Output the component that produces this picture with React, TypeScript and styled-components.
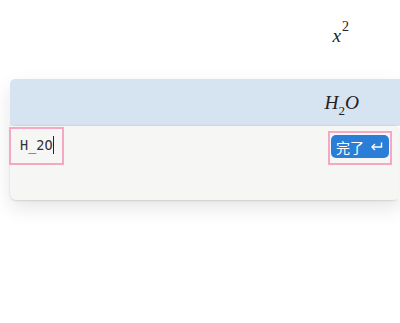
import styled, { createGlobalStyle } from "styled-components";

const GlobalStyle = createGlobalStyle`
  html, body {
    margin: 0;
    padding: 0;
    background: #ffffff;
  }
`;

// page
const Page = styled.div`
  width: 400px;
  height: 323px;
  overflow: hidden;
  font-family: "Noto Sans", "Noto Sans CJK SC", sans-serif;
`;

const Preview = styled.div`
  height: 79px;
  display: flex;
  justify-content: flex-end;
  padding-right: 51px;
  box-sizing: border-box;
  padding-top: 24px;
`;

const MathText = styled.span`
  font-family: "Liberation Serif", "DejaVu Serif", serif;
  font-style: italic;
  font-size: 19.4px;
  color: #222;
  line-height: 1;

  sup {
    font-style: normal;
    font-size: 14px;
    position: relative;
    top: -4px;
    margin-left: 1px;
  }

  sub {
    font-style: normal;
    font-size: 13px;
    position: relative;
    top: 1px;
  }
`;

// card with the rendered header and the edit panel
const Card = styled.div`
  margin-left: 10px;
  width: 392px;
  border-radius: 6px;
  box-shadow: 0 8px 20px rgba(0, 0, 0, 0.1);
`;

const Header = styled.div`
  height: 47px;
  background: #d6e3f1;
  border-radius: 5px 0 0 0;
  display: flex;
  justify-content: flex-end;
  align-items: flex-end;
  padding: 0 43px 10px 0;
  box-sizing: border-box;
`;

const Panel = styled.div`
  height: 74px;
  width: 389px;
  background: #f6f6f4;
  border-radius: 6px;
  box-shadow: 0 -1px 2px rgba(0, 0, 0, 0.06), 0 1px 2px rgba(0, 0, 0, 0.12);
  display: flex;
  justify-content: space-between;
  align-items: flex-start;
`;

const Highlight = styled.div<{ $pad: string }>`
  border: 2px solid #f4a8c5;
  padding: ${({ $pad }) => $pad};
  box-sizing: border-box;
`;

const InputBox = styled(Highlight)`
  margin: 1px 0 0 -1px;
  width: 55px;
  height: 38px;
  display: flex;
  align-items: center;
`;

const Source = styled.span`
  font-family: "DejaVu Sans Mono", "Liberation Mono", monospace;
  font-size: 13.5px;
  color: #333;
  padding-left: 9px;
  margin-top: -2px;
  display: flex;
  align-items: center;
`;

const Caret = styled.span`
  display: inline-block;
  width: 1px;
  height: 18px;
  background: #222;
`;

const ButtonBox = styled(Highlight)`
  margin: 5px 7px 0 0;
`;

const DoneButton = styled.button`
  display: flex;
  align-items: center;
  gap: 6px;
  height: 23px;
  padding: 0 6px 0 5px;
  border: none;
  border-radius: 5px;
  background: #2a7ed8;
  color: #fff;
  font-family: "Noto Sans CJK SC", "Noto Sans", sans-serif;
  font-size: 14px;
  line-height: 1;
  cursor: pointer;
`;

function EnterIcon() {
  return (
    <svg width="13" height="11" viewBox="0 0 13 11" fill="none" stroke="#fff" strokeWidth="1.4">
      <path d="M11.5 1.5v4.5H2" />
      <path d="M5 3L2 6l3 3" />
    </svg>
  );
}

export default function App() {
  return (
    <Page>
      <GlobalStyle />
      <Preview>
        <MathText>
          x<sup>2</sup>
        </MathText>
      </Preview>
      <Card>
        <Header>
          <MathText>
            H<sub>2</sub>O
          </MathText>
        </Header>
        <Panel>
          <InputBox $pad="0">
            <Source>
              H_2O
              <Caret />
            </Source>
          </InputBox>
          <ButtonBox $pad="2px 1px 5px 1px">
            <DoneButton>
              完了
              <EnterIcon />
            </DoneButton>
          </ButtonBox>
        </Panel>
      </Card>
    </Page>
  );
}
